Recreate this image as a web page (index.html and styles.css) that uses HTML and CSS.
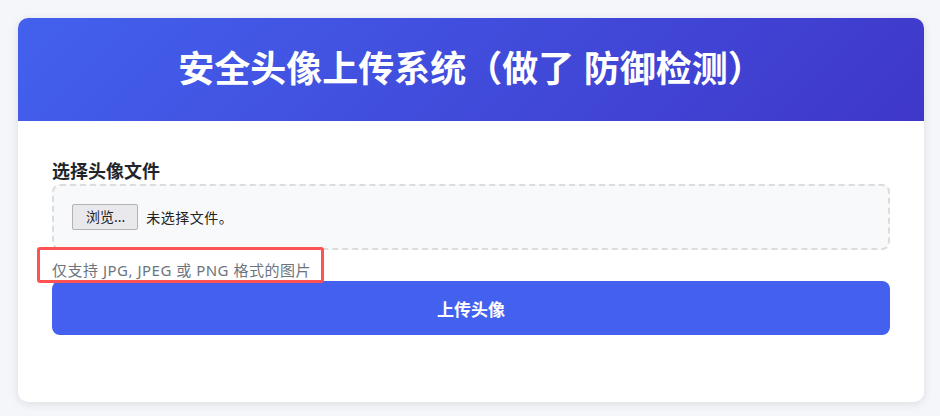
FILE: index.html
```html
<!DOCTYPE html>
<html lang="zh-CN">
<head>
    <meta charset="UTF-8">
    <meta name="viewport" content="width=device-width, initial-scale=1.0">
    <link rel="stylesheet" href="styles.css">
    <title>安全头像上传系统</title>
</head>
<body>
    <div class="card">
        <header class="card-header">
            <h1>安全头像上传系统（做了 防御检测）</h1>
        </header>
        <form class="card-body">
            <label class="field-label">选择头像文件</label>
            <div class="file-box">
                <span class="file-btn">浏览...</span>
                <span class="file-name">未选择文件。</span>
            </div>
            <p class="hint">仅支持 JPG, JPEG 或 PNG 格式的图片</p>
            <button type="button" class="submit-btn">上传头像</button>
            <div class="mark"></div>
        </form>
    </div>
</body>
</html>
```

FILE: styles.css
```css
*{
    box-sizing: border-box;
    margin: 0;
}
body{
    background: #f4f6fa;
    padding: 18px;
    font-family: "Noto Sans", "Noto Sans CJK SC", sans-serif;
    color: #212529;
}

.card{
    width: 906px;
    background: #fff;
    border-radius: 10px;
    overflow: hidden;
    box-shadow: 0 2px 10px rgba(0, 0, 0, 0.1);
}

.card-header{
    height: 103px;
    display: flex;
    align-items: center;
    justify-content: center;
    background: linear-gradient(135deg, #4361ee, #3f37c9);
}
.card-header h1{
    color: #fff;
    font-size: 36px;
    font-weight: 700;
    line-height: 1.2;
    padding-bottom: 2px;
}

.card-body{
    position: relative;
    padding: 37px 34px 67px;
    display: flex;
    flex-direction: column;
}

.field-label{
    font-size: 18px;
    font-weight: 700;
    line-height: 26px;
}

.file-box{
    display: flex;
    align-items: center;
    gap: 8px;
    height: 66px;
    padding: 0 18px;
    background: #f8f9fa;
    border: 2px dashed #dcdcdc;
    border-radius: 8px;
}
.file-btn{
    display: inline-block;
    height: 26px;
    line-height: 24px;
    padding: 0 12px 0 13px;
    font-size: 14px;
    color: #222;
    background: #e9e9ed;
    border: 1px solid #b3b3b3;
    border-radius: 2px;
}
.file-name{
    font-size: 14px;
    letter-spacing: 0.5px;
    color: #222;
}

.hint{
    margin-top: 10px;
    font-size: 15px;
    letter-spacing: 0.5px;
    line-height: 20px;
    color: #6c757d;
}

.submit-btn{
    margin-top: 1px;
    height: 54px;
    border: 0;
    border-radius: 8px;
    background: #4361ee;
    color: #fff;
    font-family: inherit;
    font-size: 17px;
    font-weight: 700;
}

.mark{
    position: absolute;
    left: 19px;
    top: 126px;
    width: 287px;
    height: 36px;
    border: 3px solid #ff5252;
    border-radius: 3px;
}
```
